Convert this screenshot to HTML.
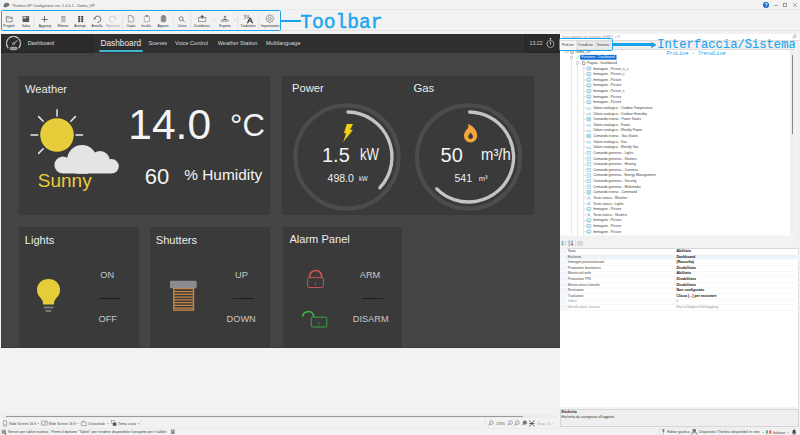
<!DOCTYPE html>
<html><head><meta charset="utf-8">
<style>
*{margin:0;padding:0;box-sizing:border-box}
html,body{width:800px;height:435px;overflow:hidden;background:#f2f2f2;font-family:"Liberation Sans",sans-serif;position:relative}
.a{position:absolute}
.t{position:absolute;white-space:nowrap;line-height:1}
svg{position:absolute;overflow:visible}
</style></head><body>

<!-- ============ TITLE BAR ============ -->
<div class="a" style="left:0;top:0;width:800px;height:9.5px;background:#f3f3f3;border-bottom:1px solid #e9e9e9"></div>
<svg style="left:2.5px;top:2px" width="7" height="6" viewBox="0 0 7 6"><path d="M0.6 3.6 C0.6 2 2 1 3.6 0.8 C5 0.6 6.4 1.6 6.4 2.8 C6.4 3.8 5.6 4.2 4.6 4.6 C3.4 5.2 2.2 5.8 1.4 5.2 C0.8 4.8 0.6 4.2 0.6 3.6 Z" fill="#6a6a6a"/><path d="M4 1.2 C5 1 6.2 1.8 6.2 2.8 C5.6 3 4.8 2.6 4.4 2 Z" fill="#7b8aa0"/><path d="M1.4 3.4 C2 2.6 3 2.2 3.8 2.4" stroke="#aaa" stroke-width="0.4" fill="none"/></svg>
<div class="t" style="left:12.1px;top:3.9px;font-size:4.3px;color:#505050;transform-origin:0 50%;transform:scaleX(0.89)">Thinknx UP Configurator ver. 1.4.0.1 - Demo_UP</div>
<div class="a" style="left:763.4px;top:1.9px;width:6px;height:6px;border-radius:50%;background:#1366c4"></div>
<div class="t" style="left:764.6px;top:2.6px;font-size:5px;font-weight:bold;color:#fff">?</div>
<div class="a" style="left:773.8px;top:4.6px;width:4px;height:0.8px;background:#aaa"></div>
<div class="a" style="left:783.4px;top:3.2px;width:3.4px;height:3.6px;border:0.8px solid #999"></div>
<svg style="left:792.8px;top:3px" width="4" height="4" viewBox="0 0 4 4"><path d="M0 0L4 4M4 0L0 4" stroke="#999" stroke-width="0.8"/></svg>

<!-- ============ TOOLBAR ============ -->
<div class="a" style="left:0;top:30.3px;width:800px;height:0.7px;background:#e4e4e4"></div>


<!-- toolbar icons -->
<svg style="left:0;top:12px" width="290" height="14" viewBox="0 12 290 14">
  <!-- folder -->
  <path d="M6.4 16.4 H8.8 L9.6 17.3 H12.2 V21.8 H6.4 Z" fill="none" stroke="#6a6a6a" stroke-width="0.7"/>
  <path d="M6.4 18.2 H12.2" stroke="#6a6a6a" stroke-width="0.5"/>
  <!-- floppy -->
  <rect x="22.6" y="16" width="6.5" height="6" rx="0.4" fill="#474747"/>
  <rect x="23.3" y="16.5" width="3" height="2.1" fill="#cfcfcf"/>
  <rect x="26.9" y="16.5" width="1.5" height="1.6" fill="#9a9a9a"/>
  <rect x="23.3" y="19.4" width="5.1" height="1.9" fill="#606060"/>
  <!-- plus -->
  <path d="M44.5 16 V22 M41.8 19.5 H47.8" stroke="#4a4a4a" stroke-width="0.75"/>
  <!-- trash -->
  <rect x="61.1" y="16.1" width="4.6" height="0.9" fill="#a0a0a0"/>
  <rect x="61.7" y="17.3" width="3.4" height="4.7" fill="#bcbcbc" stroke="#a8a8a8" stroke-width="0.4"/>
  <!-- arrange -->
  <rect x="78.2" y="16" width="2" height="1.7" fill="#3a3a3a"/><rect x="81.2" y="16" width="2" height="1.7" fill="#3a3a3a"/>
  <rect x="78.2" y="18.2" width="2" height="1.7" fill="#3a3a3a"/><rect x="81.2" y="18.2" width="2" height="1.7" fill="#3a3a3a"/>
  <rect x="78.2" y="20.4" width="2" height="1.7" fill="#3a3a3a"/><rect x="81.2" y="20.4" width="2" height="1.7" fill="#3a3a3a"/>
  <!-- undo -->
  <path d="M94.6 18.4 A3.2 3.2 0 1 1 97.4 22.4" fill="none" stroke="#505050" stroke-width="0.8"/>
  <path d="M93.3 18.6 L95.4 17.2 L95.4 19.8 Z" fill="#505050"/>
  <!-- redo -->
  <path d="M115.6 18.4 A3.2 3.2 0 1 0 112.8 22.4" fill="none" stroke="#c4c4c4" stroke-width="0.8"/>
  <path d="M116.9 18.6 L114.8 17.2 L114.8 19.8 Z" fill="#c4c4c4"/>
  <!-- copy -->
  <path d="M128.3 15.5 H131.8 L133.7 17.4 V21.8 H128.3 Z" fill="#f2f2f2" stroke="#7a7a7a" stroke-width="0.6"/>
  <path d="M131.8 15.5 V17.4 H133.7" fill="none" stroke="#7a7a7a" stroke-width="0.5"/>
  <!-- paste -->
  <rect x="144.3" y="16.2" width="5.2" height="5.6" rx="0.6" fill="#f4f4f4" stroke="#8a8a8a" stroke-width="0.6"/>
  <rect x="145.8" y="15.3" width="2.2" height="1.2" fill="#555"/>
  <!-- clipboard -->
  <rect x="161.2" y="16.2" width="4.6" height="5.6" rx="0.5" fill="#999" stroke="#777" stroke-width="0.5"/>
  <rect x="162.4" y="15.3" width="2.2" height="1.2" fill="#555"/>
  <path d="M162 18 H165 M162 19.2 H165 M162 20.4 H165" stroke="#666" stroke-width="0.4"/>
  <!-- search -->
  <circle cx="181.2" cy="18.8" r="2" fill="none" stroke="#555" stroke-width="0.7"/>
  <path d="M182.7 20.3 L184.6 21.8" stroke="#555" stroke-width="0.8"/>
  <!-- distribute -->
  <rect x="198.6" y="17.6" width="7.2" height="4" fill="none" stroke="#6a6a6a" stroke-width="0.6"/>
  <path d="M202.2 15 V19 M200.6 16.4 H203.8" stroke="#444" stroke-width="0.9"/>
  <path d="M213.9 20.1 H215.1 L214.5 20.8 Z" fill="#555"/>
  <!-- export -->
  <rect x="221.4" y="20.1" width="7.2" height="1.5" fill="none" stroke="#707070" stroke-width="0.5"/>
  <path d="M225 16.2 V19.6 M223.9 16.4 H226.1 M222.8 19.5 H227.2" stroke="#555" stroke-width="0.8"/>
  <path d="M234.4 20.1 H235.6 L235 20.8 Z" fill="#555"/>
  <!-- translator -->
  <path d="M243.6 15.2 H246 L245 16.6 M244.2 16.9 H246.2 L245.2 18.8 M243.6 18.4 L244.6 18.8" fill="none" stroke="#666" stroke-width="0.55"/>
  <path d="M247.2 14.8 V19 M248.6 14.8 V18" stroke="#666" stroke-width="0.55"/>
  <path d="M246.8 23.2 L249.3 17.4 L250.6 17.4 L253.2 23.2 L251.8 23.2 L251.2 21.6 L248.8 21.6 L248.2 23.2 Z M249.2 20.5 H250.8 L250 18.6 Z" fill="#333" fill-rule="evenodd"/>
  <!-- gear -->
  <path d="M269.13 15.70 L269.38 14.83 L270.42 14.83 L270.67 15.70 L271.48 16.03 L272.27 15.60 L273.00 16.33 L272.57 17.12 L272.90 17.93 L273.77 18.18 L273.77 19.22 L272.90 19.47 L272.57 20.28 L273.00 21.07 L272.27 21.80 L271.48 21.37 L270.67 21.70 L270.42 22.57 L269.38 22.57 L269.13 21.70 L268.32 21.37 L267.53 21.80 L266.80 21.07 L267.23 20.28 L266.90 19.47 L266.03 19.22 L266.03 18.18 L266.90 17.93 L267.23 17.12 L266.80 16.33 L267.53 15.60 L268.32 16.03 Z" fill="none" stroke="#666" stroke-width="0.6" stroke-linejoin="round"/>
  <circle cx="269.9" cy="18.7" r="1.4" fill="none" stroke="#666" stroke-width="0.6"/>
  <!-- separators -->
  <path d="M34.2 13 V29 M122.8 13 V29 M173.3 13 V29 M190.8 13 V29 M237.6 13 V29 M258.6 13 V29" stroke="#d9d9d9" stroke-width="0.6"/>
</svg>
<div class="t" style="left:-10.75px;width:40px;text-align:center;top:25.2px;font-size:3.75px;color:#2a2a2a;transform:scaleX(0.87)">Progetti</div>
<div class="t" style="left:5.5px;width:40px;text-align:center;top:25.2px;font-size:3.75px;color:#2a2a2a;transform:scaleX(0.87)">Salva</div>
<div class="t" style="left:24.5px;width:40px;text-align:center;top:25.2px;font-size:3.75px;color:#2a2a2a;transform:scaleX(0.87)">Aggiungi</div>
<div class="t" style="left:42.85px;width:40px;text-align:center;top:25.2px;font-size:3.75px;color:#2a2a2a;transform:scaleX(0.87)">Elimina</div>
<div class="t" style="left:60.3px;width:40px;text-align:center;top:25.2px;font-size:3.75px;color:#2a2a2a;transform:scaleX(0.87)">Arrange</div>
<div class="t" style="left:77.1px;width:40px;text-align:center;top:25.2px;font-size:3.75px;color:#2a2a2a;transform:scaleX(0.87)">Annulla</div>
<div class="t" style="left:92.5px;width:40px;text-align:center;top:25.2px;font-size:3.75px;color:#9a9a9a;transform:scaleX(0.87)">Ripristina</div>
<div class="t" style="left:110.5px;width:40px;text-align:center;top:25.2px;font-size:3.75px;color:#2a2a2a;transform:scaleX(0.87)">Copia</div>
<div class="t" style="left:126px;width:40px;text-align:center;top:25.2px;font-size:3.75px;color:#2a2a2a;transform:scaleX(0.87)">Incolla</div>
<div class="t" style="left:143.25px;width:40px;text-align:center;top:25.2px;font-size:3.75px;color:#2a2a2a;transform:scaleX(0.87)">Appunti</div>
<div class="t" style="left:161.5px;width:40px;text-align:center;top:25.2px;font-size:3.75px;color:#2a2a2a;transform:scaleX(0.87)">Cerca</div>
<div class="t" style="left:182px;width:40px;text-align:center;top:25.2px;font-size:3.75px;color:#2a2a2a;transform:scaleX(0.87)">Distribuisci</div>
<div class="t" style="left:205px;width:40px;text-align:center;top:25.2px;font-size:3.75px;color:#2a2a2a;transform:scaleX(0.87)">Esporta</div>
<div class="t" style="left:228.25px;width:40px;text-align:center;top:25.2px;font-size:3.75px;color:#2a2a2a;transform:scaleX(0.87)">Traduttore</div>
<div class="t" style="left:250px;width:40px;text-align:center;top:25.2px;font-size:3.75px;color:#2a2a2a;transform:scaleX(0.87)">Impostazioni</div>

<!-- annotation: Toolbar -->
<div class="a" style="left:1.2px;top:10.4px;width:280.3px;height:20.8px;border:1.6px solid #1ca6ee;border-radius:1.6px"></div>
<div class="a" style="left:281px;top:19.6px;width:19.5px;height:2px;background:#18a4ec"></div>
<div class="t" style="left:300.3px;top:13.6px;font-size:19.6px;color:#1ba6ee;font-family:'Liberation Mono',monospace;-webkit-text-stroke:0.45px #1ba6ee">Toolbar</div>

<!-- ============ DASHBOARD ============ -->
<div class="a" style="left:1.1px;top:34px;width:558.8px;height:313.6px;background:#444444;overflow:hidden">
  <!-- header -->
  <div class="a" style="left:0;top:0;width:558.8px;height:18.5px;background:#2f2f2f"></div>
  <div class="a" style="left:-1px;top:0;width:93.4px;height:18.5px;background:#2b2b2b;border-bottom-right-radius:3px;border-right:0.6px solid #242424;border-bottom:0.6px solid #262626"></div>
  <div class="a" style="left:523.6px;top:0;width:40px;height:18.5px;background:#2b2b2b;border-bottom-left-radius:3px;border-left:0.6px solid #242424;border-bottom:0.6px solid #262626"></div>
</div>

<div class="a" style="left:1.1px;top:346.8px;width:558.8px;height:0.9px;background:#383838"></div>
<!-- cards -->
<div class="a" style="left:19px;top:76px;width:251px;height:139px;background:#3a3a3a"></div>
<div class="a" style="left:282px;top:76px;width:251.6px;height:138.7px;background:#3a3a3a"></div>
<div class="a" style="left:19px;top:226.7px;width:120px;height:120.9px;background:#3a3a3a"></div>
<div class="a" style="left:150px;top:226.7px;width:120px;height:120.9px;background:#3a3a3a"></div>
<div class="a" style="left:282.5px;top:226.7px;width:119.5px;height:120.9px;background:#3a3a3a"></div>


<!-- header content -->
<svg style="left:5px;top:35px" width="17" height="16" viewBox="5 35 17 16">
  <path d="M8.4 48.2 A7 7 0 1 1 18.6 48.2" fill="none" stroke="#d4d4d4" stroke-width="1.3"/>
  <g stroke="#2a2a2a" stroke-width="0.7">
    <path d="M13.5 36.2 V37.6 M8.5 38.3 L9.5 39.3 M18.5 38.3 L17.5 39.3 M6.4 43.3 H7.8 M20.6 43.3 H19.2 M8.5 48 L9.4 47.2 M18.5 48 L17.6 47.2"/>
  </g>
  <circle cx="13.6" cy="43.6" r="1" fill="none" stroke="#d8d8d8" stroke-width="0.8"/>
  <path d="M14.3 42.9 L17.4 40.6" stroke="#d8d8d8" stroke-width="0.9"/>
  <rect x="10.2" y="47.3" width="6.8" height="2.4" rx="1" fill="#888" stroke="#d0d0d0" stroke-width="0.7"/>
</svg>
<div class="t" style="left:27.7px;top:41.2px;font-size:5.4px;color:#dcdcdc">Dashboard</div>
<div class="t" style="left:100.5px;top:39.2px;font-size:8.3px;color:#e8e8e8">Dashboard</div>
<div class="a" style="left:98.5px;top:50.2px;width:44px;height:1.8px;background:#3db5d0;border-radius:1px"></div>
<div class="t" style="left:148.5px;top:40.8px;font-size:5.55px;color:#dadada">Scenes</div>
<div class="t" style="left:175px;top:40.8px;font-size:5.55px;color:#dadada">Voice Control</div>
<div class="t" style="left:217.7px;top:40.8px;font-size:5.55px;color:#dadada">Weather Station</div>
<div class="t" style="left:266px;top:40.8px;font-size:5.55px;color:#dadada">Multilanguage</div>
<div class="t" style="left:529.6px;top:40.5px;font-size:5.2px;color:#d0d0d0">13:22</div>
<svg style="left:545px;top:37px" width="11" height="12" viewBox="0 0 11 12">
  <circle cx="5.5" cy="7" r="3.5" fill="none" stroke="#e0e0e0" stroke-width="0.6"/>
  <path d="M5.5 1.6 V3.4 M4.6 1.5 H6.4" stroke="#e0e0e0" stroke-width="0.75"/>
  <path d="M5.5 5 V7.6" stroke="#e0e0e0" stroke-width="0.9"/>
  <path d="M1.5 6.6 H1" stroke="#e0e0e0" stroke-width="0.8"/>
</svg>

<!-- WEATHER -->
<div class="t" style="left:25px;top:83.5px;font-size:11.2px;color:#ececec">Weather</div>
<svg style="left:25px;top:105px" width="100" height="72" viewBox="25 105 100 72">
  <g stroke="#e6e6e6" stroke-width="1.5" stroke-linecap="round">
    <path d="M57 109.7 V116"/>
    <path d="M31 135 H37.8"/>
    <path d="M76 135 H82.5"/>
    <path d="M38.6 116.6 L43.2 121.2"/>
    <path d="M75.4 116.6 L70.8 121.2"/>
    <path d="M38.6 153.4 L43.2 148.8"/>
  </g>
  <circle cx="57" cy="135" r="16.8" fill="#e8cd3a"/>
  <clipPath id="cc"><rect x="40" y="130" width="90" height="43.8"/></clipPath><g fill="#3a3a3a" clip-path="url(#cc)"><circle cx="82" cy="160" r="16.5"/><circle cx="63" cy="165" r="10.1"/><circle cx="100" cy="161" r="11.5"/><circle cx="111.5" cy="166.5" r="8.8"/><rect x="63" y="163" width="48.5" height="12.1"/></g>
  <g fill="#e4e4e4" clip-path="url(#cc)"><circle cx="82" cy="160" r="15"/><circle cx="63" cy="165" r="8.6"/><circle cx="100" cy="161" r="10"/><circle cx="111.5" cy="166.3" r="7.3"/><rect x="63" y="165" width="48.5" height="8.6"/></g>
</svg>
<div class="t" style="left:37.8px;top:170.9px;font-size:19px;color:#e8cd3a">Sunny</div>
<div class="t" style="left:128.3px;top:103.6px;font-size:42.5px;color:#f4f4f4">14.0</div>
<div class="t" style="left:230px;top:109.8px;font-size:31px;color:#f4f4f4">°C</div>
<div class="t" style="left:144.8px;top:166.2px;font-size:22px;color:#f4f4f4">60</div>
<div class="t" style="left:184.3px;top:167.4px;font-size:15.4px;color:#f4f4f4">% Humidity</div>

<!-- POWER / GAS -->
<div class="t" style="left:292px;top:82.9px;font-size:11.2px;color:#ececec">Power</div>
<div class="t" style="left:413.5px;top:82.9px;font-size:11.2px;color:#ececec">Gas</div>
<svg style="left:282px;top:76px" width="252" height="139" viewBox="282 76 252 139">
  <circle cx="347" cy="157" r="51.6" fill="none" stroke="#4c4c4c" stroke-width="4.2"/>
  <path d="M348 112.0 A45.0 45.0 0 0 1 379.91 187.69" fill="none" stroke="#c4c4c4" stroke-width="3.3" stroke-linecap="round"/>
  <circle cx="468.6" cy="157" r="51.6" fill="none" stroke="#4c4c4c" stroke-width="4.2"/>
  <path d="M469.6 112.0 A45.0 45.0 0 1 1 436.78 188.82" fill="none" stroke="#c4c4c4" stroke-width="3.3" stroke-linecap="round"/>
  <path d="M346.8 123.9 H353 L350.1 129.7 L352.8 130 L343.1 142.3 L346.1 133.4 L344 133 Z" fill="#f2d015"/>
  <path d="M467.8 123.9 C471 124.5 477.2 129 477.2 135.5 C477.2 139.6 474 142.5 470.6 142.5 C467 142.5 464 139.6 464 135.8 C464 132.5 466 130.5 467.6 128.6 C468.6 127.3 468.6 125.5 467.8 123.9 Z" fill="#f5a63a"/>
  <path d="M470.7 132.6 C471.4 134 473 135 473 136.6 C473 138 471.9 139 470.6 139 C469.3 139 468.2 138 468.2 136.6 C468.2 135 469.9 134 470.7 132.6 Z" fill="#3a3a3a"/>
</svg>
<div class="t" style="left:322px;top:145.1px;font-size:20px;color:#f4f4f4">1.5</div>
<div class="t" style="left:359.5px;top:146.8px;font-size:16px;color:#f4f4f4;transform-origin:0 0;transform:scaleX(0.82)">kW</div>
<div class="t" style="left:327.6px;top:173.2px;font-size:10.5px;color:#f0f0f0">498.0</div>
<div class="t" style="left:359.4px;top:175.2px;font-size:7.5px;color:#f0f0f0;transform-origin:0 0;transform:scaleX(0.8)">kW</div>
<div class="t" style="left:440.6px;top:145.1px;font-size:20px;color:#f4f4f4">50</div>
<div class="t" style="left:480.5px;top:146.8px;font-size:16px;color:#f4f4f4;transform-origin:0 0;transform:scaleX(0.93)">m³/h</div>
<div class="t" style="left:454.5px;top:173.2px;font-size:10.5px;color:#f0f0f0">541</div>
<div class="t" style="left:478.8px;top:175.2px;font-size:7.5px;color:#f0f0f0">m³</div>

<!-- LIGHTS -->
<div class="t" style="left:24.8px;top:234.7px;font-size:11.1px;color:#ececec">Lights</div>
<svg style="left:36px;top:277px" width="26" height="37" viewBox="36 277 26 37">
  <path d="M48.5 279 C42 279 37 283.5 37 290 C37 293.8 39 296.4 41 298.6 C42.4 300.2 43 302 43 304.5 L54 304.5 C54 302 54.6 300.2 56 298.6 C58 296.4 60.1 293.8 60.1 290 C60.1 283.5 55 279 48.5 279 Z" fill="#e8cd3a"/>
  <rect x="43.6" y="306.5" width="10" height="2" rx="0.8" fill="#7a7a7a"/>
  <rect x="45.5" y="310" width="5.8" height="2" rx="0.8" fill="#7a7a7a"/>
</svg>
<div class="t" style="left:100.3px;top:270.8px;font-size:9.2px;color:#c8c8c8">ON</div>
<div class="a" style="left:98.8px;top:297.9px;width:21.2px;height:1px;background:#1e1e1e"></div>
<div class="t" style="left:98.5px;top:314.8px;font-size:9.2px;color:#c8c8c8">OFF</div>

<!-- SHUTTERS -->
<div class="t" style="left:155.8px;top:234.7px;font-size:11.1px;color:#ececec">Shutters</div>
<svg style="left:168px;top:279px" width="31" height="34" viewBox="168 279 31 34">
  <rect x="170" y="280.7" width="26.7" height="7.6" rx="1.2" fill="#8b8c8f"/>
  <rect x="173.8" y="288.6" width="19.7" height="21.5" fill="none" stroke="#c48646" stroke-width="1.4"/>
  <g stroke="#c48646" stroke-width="1.1">
    <path d="M173.8 291.6 H193.5 M173.8 294.35 H193.5 M173.8 297.1 H193.5 M173.8 299.85 H193.5 M173.8 302.6 H193.5 M173.8 305.35 H193.5 M173.8 308.1 H193.5"/>
  </g>
</svg>
<div class="t" style="left:235px;top:270.8px;font-size:9.2px;color:#c8c8c8">UP</div>
<div class="a" style="left:232.9px;top:297.9px;width:21.1px;height:1px;background:#1e1e1e"></div>
<div class="t" style="left:226.6px;top:314.8px;font-size:9.2px;color:#c8c8c8">DOWN</div>

<!-- ALARM -->
<div class="t" style="left:289.4px;top:234.1px;font-size:11.1px;color:#ececec">Alarm Panel</div>
<svg style="left:300px;top:268px" width="30" height="62" viewBox="300 268 30 62">
  <path d="M309.8 277.5 V275.8 A5.9 5.2 0 0 1 321.6 275.8 V277.5" fill="none" stroke="#e05555" stroke-width="1.5"/>
  <rect x="307.6" y="277.6" width="15.8" height="9.9" rx="1.2" fill="none" stroke="#c85050" stroke-width="1"/>
  <path d="M315.5 282.6 V285" stroke="#d05050" stroke-width="0.8"/>
  <path d="M302.6 316.8 A5.6 5.6 0 0 1 313.6 315.8 V317" fill="none" stroke="#3cb84a" stroke-width="1.5"/>
  <rect x="311.3" y="317.1" width="15.4" height="9.9" rx="1.2" fill="none" stroke="#35a845" stroke-width="1"/>
  <path d="M318.9 322.2 V324.6" stroke="#35a845" stroke-width="0.8"/>
</svg>
<div class="t" style="left:359.8px;top:270.8px;font-size:9.2px;color:#c8c8c8">ARM</div>
<div class="a" style="left:361.7px;top:297.8px;width:21.2px;height:1px;background:#1e1e1e"></div>
<div class="t" style="left:352.8px;top:314.8px;font-size:9.2px;color:#c8c8c8">DISARM</div>

<!-- ============ RIGHT PANEL ============ -->
<div class="a" style="left:560px;top:33.5px;width:239px;height:7px;background:#fff;border-bottom:0.6px solid #ddd"></div>
<div class="a" style="left:559.8px;top:50px;width:230.2px;height:185px;background:#fff"></div>
<div class="a" style="left:790px;top:49.2px;width:5.2px;height:186px;background:#efefef"></div>
<div class="a" style="left:559.8px;top:247.5px;width:239.2px;height:159.4px;background:#fff;border-top:0.7px solid #d6d6d6;border-right:0.5px solid #e0e0e0"></div>
<div class="a" style="left:559.8px;top:408.8px;width:239.2px;height:18.2px;background:#efefef;border:0.6px solid #d6d6d6"></div>

<!--TREE--><svg style="left:0;top:0" width="800" height="435" viewBox="0 0 800 435"><path d="M571.6 54.6 V235 M577.5 60.2 V235 M583.6 65.8 V235" stroke="#c4c4c4" stroke-width="0.45"/><rect x="565" y="50.55" width="2.4" height="2.4" fill="#fff" stroke="#b0b0b0" stroke-width="0.4"/><path d="M565.6 51.75 H566.8 M567.4 51.75 H570.5" stroke="#aaa" stroke-width="0.4"/><path d="M571 50.15 H572.6 L573.3 50.85 V53.35 H571 Z" fill="#fff" stroke="#333" stroke-width="0.45"/><rect x="580.2" y="54.88" width="36.3" height="4.8" fill="#0b6dd6"/><rect x="570.4" y="56.17" width="2.4" height="2.4" fill="#f6f6f6" stroke="#c0c0c0" stroke-width="0.4"/><path d="M571 57.38 H572.2" stroke="#aaa" stroke-width="0.4"/><path d="M575.8 57.38 L577 58.48 L579.2 55.77" fill="none" stroke="#5cb85c" stroke-width="0.55"/><rect x="576.3" y="61.80" width="2.4" height="2.4" fill="#fff" stroke="#b0b0b0" stroke-width="0.4"/><path d="M576.9 63.00 H578.1 M578.7 63.00 H582.3" stroke="#aaa" stroke-width="0.4"/><path d="M582.6 61.40 H584.2 L584.9 62.10 V64.60 H582.6 Z" fill="#fff" stroke="#333" stroke-width="0.45"/><path d="M583.6 68.62 H586.3" stroke="#b4b4b4" stroke-width="0.4"/><rect x="587" y="66.92" width="3.8" height="2.9" rx="0.4" fill="#e4f2f8" stroke="#4aa0c0" stroke-width="0.5"/><path d="M588.2 70.22 H589.6" stroke="#4aa0c0" stroke-width="0.45"/><path d="M583.6 74.25 H586.3" stroke="#b4b4b4" stroke-width="0.4"/><rect x="587" y="72.55" width="3.8" height="2.9" rx="0.4" fill="#e4f2f8" stroke="#4aa0c0" stroke-width="0.5"/><path d="M588.2 75.85 H589.6" stroke="#4aa0c0" stroke-width="0.45"/><path d="M583.6 79.88 H586.3" stroke="#b4b4b4" stroke-width="0.4"/><rect x="587" y="78.17" width="3.8" height="2.9" rx="0.4" fill="#e4f2f8" stroke="#4aa0c0" stroke-width="0.5"/><path d="M588.2 81.47 H589.6" stroke="#4aa0c0" stroke-width="0.45"/><path d="M583.6 85.50 H586.3" stroke="#b4b4b4" stroke-width="0.4"/><rect x="587" y="83.80" width="3.8" height="2.9" rx="0.4" fill="#e4f2f8" stroke="#4aa0c0" stroke-width="0.5"/><path d="M588.2 87.10 H589.6" stroke="#4aa0c0" stroke-width="0.45"/><path d="M583.6 91.12 H586.3" stroke="#b4b4b4" stroke-width="0.4"/><rect x="587" y="89.42" width="3.8" height="2.9" rx="0.4" fill="#e4f2f8" stroke="#4aa0c0" stroke-width="0.5"/><path d="M588.2 92.72 H589.6" stroke="#4aa0c0" stroke-width="0.45"/><path d="M583.6 96.75 H586.3" stroke="#b4b4b4" stroke-width="0.4"/><rect x="587" y="95.05" width="3.8" height="2.9" rx="0.4" fill="#e4f2f8" stroke="#4aa0c0" stroke-width="0.5"/><path d="M588.2 98.35 H589.6" stroke="#4aa0c0" stroke-width="0.45"/><path d="M583.6 102.38 H586.3" stroke="#b4b4b4" stroke-width="0.4"/><rect x="587" y="100.67" width="3.8" height="2.9" rx="0.4" fill="#e4f2f8" stroke="#4aa0c0" stroke-width="0.5"/><path d="M588.2 103.97 H589.6" stroke="#4aa0c0" stroke-width="0.45"/><path d="M583.6 108.00 H586.3" stroke="#b4b4b4" stroke-width="0.4"/><path d="M586.9 109.30 A2 2 0 0 1 590.9 109.30 Z" fill="#eef7fb" stroke="#7ab8d4" stroke-width="0.45"/><path d="M583.6 113.62 H586.3" stroke="#b4b4b4" stroke-width="0.4"/><path d="M586.9 114.92 A2 2 0 0 1 590.9 114.92 Z" fill="#eef7fb" stroke="#7ab8d4" stroke-width="0.45"/><path d="M583.6 119.25 H586.3" stroke="#b4b4b4" stroke-width="0.4"/><rect x="587" y="117.55" width="3.8" height="3.4" fill="#dcedf5" stroke="#5aaacc" stroke-width="0.45"/><path d="M587.6 118.75 H590.2 M587.6 119.85 H590.2" stroke="#5aaacc" stroke-width="0.35"/><path d="M583.6 124.88 H586.3" stroke="#b4b4b4" stroke-width="0.4"/><path d="M586.9 126.17 A2 2 0 0 1 590.9 126.17 Z" fill="#eef7fb" stroke="#7ab8d4" stroke-width="0.45"/><path d="M583.6 130.50 H586.3" stroke="#b4b4b4" stroke-width="0.4"/><path d="M586.9 131.80 A2 2 0 0 1 590.9 131.80 Z" fill="#eef7fb" stroke="#7ab8d4" stroke-width="0.45"/><path d="M583.6 136.12 H586.3" stroke="#b4b4b4" stroke-width="0.4"/><rect x="587" y="134.43" width="3.8" height="3.4" fill="#dcedf5" stroke="#5aaacc" stroke-width="0.45"/><path d="M587.6 135.62 H590.2 M587.6 136.72 H590.2" stroke="#5aaacc" stroke-width="0.35"/><path d="M583.6 141.75 H586.3" stroke="#b4b4b4" stroke-width="0.4"/><path d="M586.9 143.05 A2 2 0 0 1 590.9 143.05 Z" fill="#eef7fb" stroke="#7ab8d4" stroke-width="0.45"/><path d="M583.6 147.38 H586.3" stroke="#b4b4b4" stroke-width="0.4"/><path d="M586.9 148.68 A2 2 0 0 1 590.9 148.68 Z" fill="#eef7fb" stroke="#7ab8d4" stroke-width="0.45"/><path d="M583.6 153.00 H586.3" stroke="#b4b4b4" stroke-width="0.4"/><rect x="587" y="151.30" width="3.8" height="3.4" fill="#eef7fb" stroke="#6ab2d2" stroke-width="0.45"/><path d="M587.8 152.70 H589.2" stroke="#6ab2d2" stroke-width="0.35"/><path d="M583.6 158.62 H586.3" stroke="#b4b4b4" stroke-width="0.4"/><rect x="587" y="156.93" width="3.8" height="3.4" fill="#eef7fb" stroke="#6ab2d2" stroke-width="0.45"/><path d="M587.8 158.32 H589.2" stroke="#6ab2d2" stroke-width="0.35"/><path d="M583.6 164.25 H586.3" stroke="#b4b4b4" stroke-width="0.4"/><rect x="587" y="162.55" width="3.8" height="3.4" fill="#eef7fb" stroke="#6ab2d2" stroke-width="0.45"/><path d="M587.8 163.95 H589.2" stroke="#6ab2d2" stroke-width="0.35"/><path d="M583.6 169.88 H586.3" stroke="#b4b4b4" stroke-width="0.4"/><rect x="587" y="168.18" width="3.8" height="3.4" fill="#eef7fb" stroke="#6ab2d2" stroke-width="0.45"/><path d="M587.8 169.57 H589.2" stroke="#6ab2d2" stroke-width="0.35"/><path d="M583.6 175.50 H586.3" stroke="#b4b4b4" stroke-width="0.4"/><rect x="587" y="173.80" width="3.8" height="3.4" fill="#eef7fb" stroke="#6ab2d2" stroke-width="0.45"/><path d="M587.8 175.20 H589.2" stroke="#6ab2d2" stroke-width="0.35"/><path d="M583.6 181.12 H586.3" stroke="#b4b4b4" stroke-width="0.4"/><rect x="587" y="179.43" width="3.8" height="3.4" fill="#eef7fb" stroke="#6ab2d2" stroke-width="0.45"/><path d="M587.8 180.82 H589.2" stroke="#6ab2d2" stroke-width="0.35"/><path d="M583.6 186.75 H586.3" stroke="#b4b4b4" stroke-width="0.4"/><rect x="587" y="185.05" width="3.8" height="3.4" fill="#eef7fb" stroke="#6ab2d2" stroke-width="0.45"/><path d="M587.8 186.45 H589.2" stroke="#6ab2d2" stroke-width="0.35"/><path d="M583.6 192.38 H586.3" stroke="#b4b4b4" stroke-width="0.4"/><rect x="587" y="190.68" width="3.8" height="3.4" fill="#dcedf5" stroke="#5aaacc" stroke-width="0.45"/><path d="M587.6 191.88 H590.2 M587.6 192.97 H590.2" stroke="#5aaacc" stroke-width="0.35"/><path d="M583.6 198.00 H586.3" stroke="#b4b4b4" stroke-width="0.4"/><path d="M587.4 199.70 L588.9 196.30 L590.4 199.70 M587.9 198.50 H589.9" fill="none" stroke="#5aa4cc" stroke-width="0.45"/><path d="M583.6 203.62 H586.3" stroke="#b4b4b4" stroke-width="0.4"/><path d="M587.4 205.32 L588.9 201.93 L590.4 205.32 M587.9 204.12 H589.9" fill="none" stroke="#5aa4cc" stroke-width="0.45"/><path d="M583.6 209.25 H586.3" stroke="#b4b4b4" stroke-width="0.4"/><rect x="587" y="207.55" width="3.8" height="2.9" rx="0.4" fill="#e4f2f8" stroke="#4aa0c0" stroke-width="0.5"/><path d="M588.2 210.85 H589.6" stroke="#4aa0c0" stroke-width="0.45"/><path d="M583.6 214.88 H586.3" stroke="#b4b4b4" stroke-width="0.4"/><path d="M587.4 216.57 L588.9 213.18 L590.4 216.57 M587.9 215.38 H589.9" fill="none" stroke="#5aa4cc" stroke-width="0.45"/><path d="M583.6 220.50 H586.3" stroke="#b4b4b4" stroke-width="0.4"/><rect x="587" y="218.80" width="3.8" height="2.9" rx="0.4" fill="#e4f2f8" stroke="#4aa0c0" stroke-width="0.5"/><path d="M588.2 222.10 H589.6" stroke="#4aa0c0" stroke-width="0.45"/><path d="M583.6 226.12 H586.3" stroke="#b4b4b4" stroke-width="0.4"/><rect x="587" y="224.43" width="3.8" height="2.9" rx="0.4" fill="#e4f2f8" stroke="#4aa0c0" stroke-width="0.5"/><path d="M588.2 227.72 H589.6" stroke="#4aa0c0" stroke-width="0.45"/><path d="M583.6 231.75 H586.3" stroke="#b4b4b4" stroke-width="0.4"/><rect x="587" y="230.05" width="3.8" height="2.9" rx="0.4" fill="#e4f2f8" stroke="#4aa0c0" stroke-width="0.5"/><path d="M588.2 233.35 H589.6" stroke="#4aa0c0" stroke-width="0.45"/></svg>
<div class="t" style="left:575.5px;top:50.67px;font-size:3.35px;color:#3a3a3a">Demo_UP</div>
<div class="t" style="left:581.5px;top:56.29px;font-size:3.35px;color:#fff">Funzione - Dashboard</div>
<div class="t" style="left:587px;top:61.92px;font-size:3.35px;color:#3a3a3a">Pagina - Dashboard</div>
<div class="t" style="left:593.2px;top:67.54px;font-size:3.35px;color:#3a3a3a">Immagine - Picture_s_s</div>
<div class="t" style="left:593.2px;top:73.17px;font-size:3.35px;color:#3a3a3a">Immagine - Picture_c</div>
<div class="t" style="left:593.2px;top:78.79px;font-size:3.35px;color:#3a3a3a">Immagine - Picture</div>
<div class="t" style="left:593.2px;top:84.42px;font-size:3.35px;color:#3a3a3a">Immagine - Picture</div>
<div class="t" style="left:593.2px;top:90.04px;font-size:3.35px;color:#3a3a3a">Immagine - Picture_c</div>
<div class="t" style="left:593.2px;top:95.67px;font-size:3.35px;color:#3a3a3a">Immagine - Picture</div>
<div class="t" style="left:593.2px;top:101.29px;font-size:3.35px;color:#3a3a3a">Immagine - Picture</div>
<div class="t" style="left:593.2px;top:106.92px;font-size:3.35px;color:#3a3a3a">Valore analogico - Outdoor Temperature</div>
<div class="t" style="left:593.2px;top:112.54px;font-size:3.35px;color:#3a3a3a">Valore analogico - Outdoor Humidity</div>
<div class="t" style="left:593.2px;top:118.17px;font-size:3.35px;color:#3a3a3a">Comando esteso - Power States</div>
<div class="t" style="left:593.2px;top:123.79px;font-size:3.35px;color:#3a3a3a">Valore analogico - Power</div>
<div class="t" style="left:593.2px;top:129.42px;font-size:3.35px;color:#3a3a3a">Valore analogico - Weekly Power</div>
<div class="t" style="left:593.2px;top:135.04px;font-size:3.35px;color:#3a3a3a">Comando esteso - Gas States</div>
<div class="t" style="left:593.2px;top:140.67px;font-size:3.35px;color:#3a3a3a">Valore analogico - Gas</div>
<div class="t" style="left:593.2px;top:146.29px;font-size:3.35px;color:#3a3a3a">Valore analogico - Weekly Gas</div>
<div class="t" style="left:593.2px;top:151.92px;font-size:3.35px;color:#3a3a3a">Comando generico - Lights</div>
<div class="t" style="left:593.2px;top:157.54px;font-size:3.35px;color:#3a3a3a">Comando generico - Shutters</div>
<div class="t" style="left:593.2px;top:163.17px;font-size:3.35px;color:#3a3a3a">Comando generico - Heating</div>
<div class="t" style="left:593.2px;top:168.79px;font-size:3.35px;color:#3a3a3a">Comando generico - Cameras</div>
<div class="t" style="left:593.2px;top:174.42px;font-size:3.35px;color:#3a3a3a">Comando generico - Energy Management</div>
<div class="t" style="left:593.2px;top:180.04px;font-size:3.35px;color:#3a3a3a">Comando generico - Security</div>
<div class="t" style="left:593.2px;top:185.67px;font-size:3.35px;color:#3a3a3a">Comando generico - Multimedia</div>
<div class="t" style="left:593.2px;top:191.29px;font-size:3.35px;color:#3a3a3a">Comando esteso - Command</div>
<div class="t" style="left:593.2px;top:196.92px;font-size:3.35px;color:#3a3a3a">Testo statico - Weather</div>
<div class="t" style="left:593.2px;top:202.54px;font-size:3.35px;color:#3a3a3a">Testo statico - Lights</div>
<div class="t" style="left:593.2px;top:208.17px;font-size:3.35px;color:#3a3a3a">Immagine - Picture</div>
<div class="t" style="left:593.2px;top:213.79px;font-size:3.35px;color:#3a3a3a">Testo statico - Shutters</div>
<div class="t" style="left:593.2px;top:219.42px;font-size:3.35px;color:#3a3a3a">Immagine - Picture</div>
<div class="t" style="left:593.2px;top:225.04px;font-size:3.35px;color:#3a3a3a">Immagine - Picture</div>
<div class="t" style="left:593.2px;top:230.67px;font-size:3.35px;color:#3a3a3a">Immagine - Picture</div><!--/TREE-->

<div class="t" style="left:561.25px;top:35.6px;font-size:3.43px;color:#999">Trova oggetto nel progetto (SHIFT + F)</div>
<svg style="left:792px;top:34px" width="5" height="5" viewBox="0 0 5 5"><circle cx="3" cy="2" r="1.4" fill="none" stroke="#888" stroke-width="0.5"/><path d="M2 3 L0.6 4.4" stroke="#888" stroke-width="0.6"/></svg>
<!-- tabs -->
<div class="a" style="left:559.8px;top:40.6px;width:239.2px;height:9.4px;background:#f0f0f0;border-bottom:0.5px solid #dcdcdc"></div>
<div class="a" style="left:560px;top:40.6px;width:16px;height:9.4px;background:#f6f6f6"></div>
<div class="a" style="left:576.3px;top:41.2px;width:20px;height:8.4px;background:#ececec;border:0.4px solid #e0e0e0"></div>
<div class="a" style="left:596.3px;top:41.2px;width:15px;height:8.4px;background:#ececec;border:0.4px solid #e0e0e0"></div>
<div class="t" style="left:562px;top:43.7px;font-size:3.45px;color:#333">ProLine</div>
<div class="t" style="left:577.8px;top:43.9px;font-size:3.42px;color:#333">TrendLine</div>
<div class="t" style="left:597.1px;top:43.9px;font-size:3.3px;color:#333">Sistema</div>
<div class="a" style="left:558.5px;top:38.4px;width:54px;height:12.2px;border:1.7px solid #1ca6ee;border-radius:1.6px"></div>
<div class="a" style="left:612px;top:43.2px;width:42px;height:2.8px;background:#18a4ec"></div>
<svg style="left:651px;top:41.5px" width="6" height="6" viewBox="0 0 6 6"><path d="M0.5 0.6 L5 3 L0.5 5.4 Z" fill="#18a4ec" stroke="#18a4ec" stroke-width="0.8" stroke-linejoin="round"/></svg>
<div class="t" style="left:657.3px;top:38.7px;font-size:12.15px;color:#1ba6ee;font-family:'Liberation Mono',monospace;-webkit-text-stroke:0.15px #1ba6ee">Interfaccia/Sistema</div>
<div class="t" style="left:666.5px;top:51.7px;font-size:5.2px;color:#18a4ec;font-family:'Liberation Mono',monospace;font-style:italic">ProLine - TrendLine</div>
<!-- scrollbar thumb -->
<div class="a" style="left:791.9px;top:54.5px;width:1px;height:79.2px;background:#8a8a8a"></div>
<div class="a" style="left:795.2px;top:40.6px;width:4.8px;height:206.6px;background:#f0f0f0"></div>
<div class="a" style="left:559.8px;top:234.8px;width:236px;height:0.8px;background:#f8f8f8"></div>
<div class="a" style="left:795.2px;top:49.2px;width:0.8px;height:186.4px;background:#f8f8f8"></div>
<!-- prop toolbar -->
<svg style="left:0;top:0" width="800" height="435" viewBox="0 0 800 435">
  <rect x="561.6" y="241.2" width="1.6" height="1.6" fill="#5a9a9a"/><rect x="561.6" y="243.6" width="1.6" height="1.6" fill="#5a9a9a"/>
  <path d="M564 242 H566.3 M564 244.4 H566.3" stroke="#9cc8d8" stroke-width="0.8"/>
  <path d="M568.4 243 L569.4 240.4 L570.4 243" fill="none" stroke="#4a7fd0" stroke-width="0.5"/>
  <path d="M568.6 243.8 H570.2 L568.6 245.4 H570.2" fill="none" stroke="#c05050" stroke-width="0.5"/>
  <path d="M572.2 240.4 V245 M571.4 244 L572.2 245.4 L573 244" fill="none" stroke="#222" stroke-width="0.5"/>
  <path d="M575.7 240 V247" stroke="#c8c8c8" stroke-width="0.5"/>
  <rect x="577.9" y="241.2" width="4.8" height="4.2" fill="#dcdcdc" stroke="#bdbdbd" stroke-width="0.4"/>
</svg>
<div class="a" style="left:560.4px;top:248.1px;width:7px;height:61.6px;background:#f2f5fa"></div>
<div class="a" style="left:567.4px;top:253.70px;width:231.6px;height:5.6px;background:#eef2f9"></div>
<div class="t" style="left:567.8px;top:250.04px;font-size:3.4px;color:#454545">Stato</div>
<div class="t" style="left:676.5px;top:249.94px;font-size:3.6px;color:#111;font-weight:bold">Abilitato</div>
<div class="a" style="left:560.4px;top:253.70px;width:238.6px;height:0.35px;background:#f9f9f9"></div>
<div class="t" style="left:567.8px;top:255.64px;font-size:3.4px;color:#454545">Etichetta</div>
<div class="t" style="left:676.5px;top:255.54px;font-size:3.6px;color:#111;font-weight:bold">Dashboard</div>
<div class="a" style="left:560.4px;top:259.30px;width:238.6px;height:0.35px;background:#f9f9f9"></div>
<div class="t" style="left:567.8px;top:261.24px;font-size:3.4px;color:#454545">Immagini personalizzate</div>
<div class="t" style="left:676.5px;top:261.14px;font-size:3.6px;color:#111;font-weight:bold">(Raccolta)</div>
<div class="a" style="left:560.4px;top:264.90px;width:238.6px;height:0.35px;background:#f9f9f9"></div>
<div class="t" style="left:567.8px;top:266.84px;font-size:3.4px;color:#454545">Protezione biometrica</div>
<div class="t" style="left:676.5px;top:266.74px;font-size:3.6px;color:#111;font-weight:bold">Disabilitato</div>
<div class="a" style="left:560.4px;top:270.50px;width:238.6px;height:0.35px;background:#f9f9f9"></div>
<div class="t" style="left:567.8px;top:272.44px;font-size:3.4px;color:#454545">Mostra nel web</div>
<div class="t" style="left:676.5px;top:272.34px;font-size:3.6px;color:#111;font-weight:bold">Abilitato</div>
<div class="a" style="left:560.4px;top:276.10px;width:238.6px;height:0.35px;background:#f9f9f9"></div>
<div class="t" style="left:567.8px;top:278.04px;font-size:3.4px;color:#454545">Protezione PIN</div>
<div class="t" style="left:676.5px;top:277.94px;font-size:3.6px;color:#111;font-weight:bold">Disabilitato</div>
<div class="a" style="left:560.4px;top:281.70px;width:238.6px;height:0.35px;background:#f9f9f9"></div>
<div class="t" style="left:567.8px;top:283.64px;font-size:3.4px;color:#454545">Mostra menu laterale</div>
<div class="t" style="left:676.5px;top:283.54px;font-size:3.6px;color:#111;font-weight:bold">Disabilitato</div>
<div class="a" style="left:560.4px;top:287.30px;width:238.6px;height:0.35px;background:#f9f9f9"></div>
<div class="t" style="left:567.8px;top:289.24px;font-size:3.4px;color:#454545">Restrizioni</div>
<div class="t" style="left:676.5px;top:289.14px;font-size:3.6px;color:#111;font-weight:bold">Non configurato</div>
<div class="a" style="left:560.4px;top:292.90px;width:238.6px;height:0.35px;background:#f9f9f9"></div>
<div class="t" style="left:567.8px;top:294.84px;font-size:3.4px;color:#454545">Traduzioni</div>
<div class="t" style="left:676.5px;top:294.74px;font-size:3.6px;color:#111;font-weight:bold">Clicca [...] per mostrare</div>
<div class="a" style="left:560.4px;top:298.50px;width:238.6px;height:0.35px;background:#f9f9f9"></div>
<div class="t" style="left:567.8px;top:300.44px;font-size:3.4px;color:#9a9a9a">Indice</div>
<div class="t" style="left:676.5px;top:300.44px;font-size:3.4px;color:#9a9a9a;font-weight:normal">0</div>
<div class="a" style="left:560.4px;top:304.10px;width:238.6px;height:0.35px;background:#f9f9f9"></div>
<div class="t" style="left:567.8px;top:306.04px;font-size:3.4px;color:#9a9a9a">Identificatore univoco</div>
<div class="t" style="left:676.5px;top:306.04px;font-size:3.4px;color:#9a9a9a;font-weight:normal">Hq-hvZddgkaeGkhhbpgbng</div>
<div class="a" style="left:560.4px;top:309.70px;width:238.6px;height:0.35px;background:#f9f9f9"></div>
<div class="a" style="left:675.2px;top:248px;width:0.4px;height:61.6px;background:#f8f8f8"></div>
<!-- description -->
<div class="t" style="left:561.5px;top:411px;font-size:3.6px;color:#222;font-weight:bold">Etichetta</div>
<div class="t" style="left:561.5px;top:416.3px;font-size:3.5px;color:#333">Etichetta da assegnare all'oggetto</div>

<!-- ============ BOTTOM ============ -->
<div class="a" style="left:1px;top:415px;width:557px;height:3px;background:#ececec"></div>
<div class="a" style="left:6.4px;top:415.9px;width:516.6px;height:0.9px;background:#9a9a9a"></div>
<div class="a" style="left:0;top:427.6px;width:800px;height:0.5px;background:#ebebeb"></div>


<svg style="left:0;top:0" width="800" height="435" viewBox="0 0 800 435">
  <!-- bottom toolbar icons -->
  <rect x="3.4" y="420.6" width="3.2" height="5.6" rx="0.4" fill="none" stroke="#666" stroke-width="0.5"/>
  <path d="M4.3 424.6 H5.7" stroke="#666" stroke-width="0.5"/>
  <path d="M37.9 423.2 H39.1 L38.5 423.9 Z M77.4 423.2 H78.6 L78 423.9 Z M107.4 423.2 H108.6 L108 423.9 Z M138.2 423.2 H139.4 L138.8 423.9 Z" fill="#444"/>
  <rect x="41.5" y="421.2" width="5.8" height="4" rx="0.4" fill="none" stroke="#666" stroke-width="0.5"/>
  <path d="M43.5 424.6 L46.5 421.6" stroke="#555" stroke-width="0.5"/>
  <path d="M81.4 422 H86.2 V425.6 H81.4 Z M82.4 422 L83.4 420.9 H84.4" fill="none" stroke="#666" stroke-width="0.5"/>
  <rect x="111.2" y="420.6" width="3.4" height="2.6" fill="none" stroke="#777" stroke-width="0.45"/>
  <rect x="112.8" y="422.6" width="3.6" height="3.2" fill="#555"/>
  <path d="M140.6 419.6 V427" stroke="#d4d4d4" stroke-width="0.5"/>
  <!-- zoom controls -->
  <path d="M485.4 419.4 V427.2" stroke="#d0d0d0" stroke-width="0.5"/>
  <circle cx="491.4" cy="422.6" r="1.8" fill="none" stroke="#555" stroke-width="0.5"/><path d="M490.2 423.8 L488.6 425.4" stroke="#555" stroke-width="0.7"/>
  <circle cx="510.6" cy="422.6" r="1.8" fill="none" stroke="#555" stroke-width="0.5"/><path d="M509.4 423.8 L507.8 425.4" stroke="#555" stroke-width="0.7"/>
  <circle cx="517.4" cy="422.6" r="1.8" fill="none" stroke="#555" stroke-width="0.5"/><path d="M516.2 423.8 L514.6 425.4" stroke="#555" stroke-width="0.7"/>
  <circle cx="524.8" cy="422.6" r="1.8" fill="#777" stroke="#555" stroke-width="0.5"/><path d="M523.6 423.8 L522 425.4" stroke="#555" stroke-width="0.7"/>
  <path d="M529.2 420.4 L534.4 426.6 M534.4 420.4 L529.2 426.6 M529.2 423.5 H534.4" stroke="#333" stroke-width="0.7"/>
  <path d="M552.4 423.2 H553.6 L553 423.9 Z" fill="#999"/>
  <!-- status bar icons -->
  <rect x="1.6" y="429.8" width="4.4" height="4" fill="#9a9a9a"/>
  <circle cx="5.6" cy="434" r="0.8" fill="#d02020"/>
  <path d="M49.4 428.8 V435" stroke="#cfcfcf" stroke-width="0.5"/>
  <rect x="171" y="429.6" width="3.6" height="4.4" fill="#8a8a8a"/>
  <path d="M171.6 430.6 H173.2 M171.6 431.6 H173.8" stroke="#ddd" stroke-width="0.35"/>
  <path d="M659.2 428.4 V435" stroke="#cfcfcf" stroke-width="0.5"/>
  <path d="M662.4 429.4 H664.2 L663.9 431.6 H662.7 Z M663.3 431.6 V434.6" fill="#777" stroke="#777" stroke-width="0.5"/>
  <rect x="692.6" y="429.2" width="3.2" height="2.6" fill="#666"/>
  <path d="M691.6 434.6 V432.8 H696.8 V434.6 M694.2 431.8 V432.8" fill="none" stroke="#555" stroke-width="0.6"/>
  <path d="M762.6 432.1 H763.8 L763.2 432.8 Z M787.6 432.1 H788.8 L788.2 432.8 Z" fill="#444"/>
  <rect x="766.2" y="430.4" width="1.6" height="3.2" fill="#2e9a44"/><rect x="767.8" y="430.4" width="1.6" height="3.2" fill="#f4f4f4"/><rect x="769.4" y="430.4" width="1.6" height="3.2" fill="#d83a3a"/>
  <path d="M791.6 433.6 H796.6 L795.6 432.4 V431 A1.5 1.5 0 0 0 792.6 431 V432.4 Z" fill="#444"/>
  <circle cx="794.1" cy="434.4" r="0.6" fill="#444"/>
</svg>
<div class="t" style="left:9px;top:422.6px;font-size:3.42px;color:#444">Wide Screen 16:9</div>
<div class="t" style="left:48.5px;top:422.6px;font-size:3.42px;color:#444">Wide Screen 16:9</div>
<div class="t" style="left:88px;top:422.6px;font-size:3.36px;color:#444">Orizzontale</div>
<div class="t" style="left:118px;top:422.6px;font-size:3.48px;color:#444">Tema scuro</div>
<div class="t" style="left:496px;top:422.6px;font-size:3.42px;color:#444">170%</div>
<div class="t" style="left:537px;top:422.6px;font-size:3.42px;color:#aaa">Snap: 10</div>
<div class="t" style="left:8px;top:430.9px;font-size:3.69px;color:#444">Server per tablet inattivo</div>
<div class="t" style="left:51.25px;top:430.9px;font-size:3.73px;color:#444">Premi il bottone "Tablet" per rendere disponibile il progetto per il tablet.</div>
<div class="t" style="left:667.2px;top:430.9px;font-size:3.82px;color:#444">Editor grafico</div>
<div class="t" style="left:699px;top:430.9px;font-size:3.8px;color:#444">Dispositivi Thinknx disponibili in rete</div>
<div class="t" style="left:772.5px;top:430.9px;font-size:3.9px;color:#444">Italiano</div>

</body></html>
